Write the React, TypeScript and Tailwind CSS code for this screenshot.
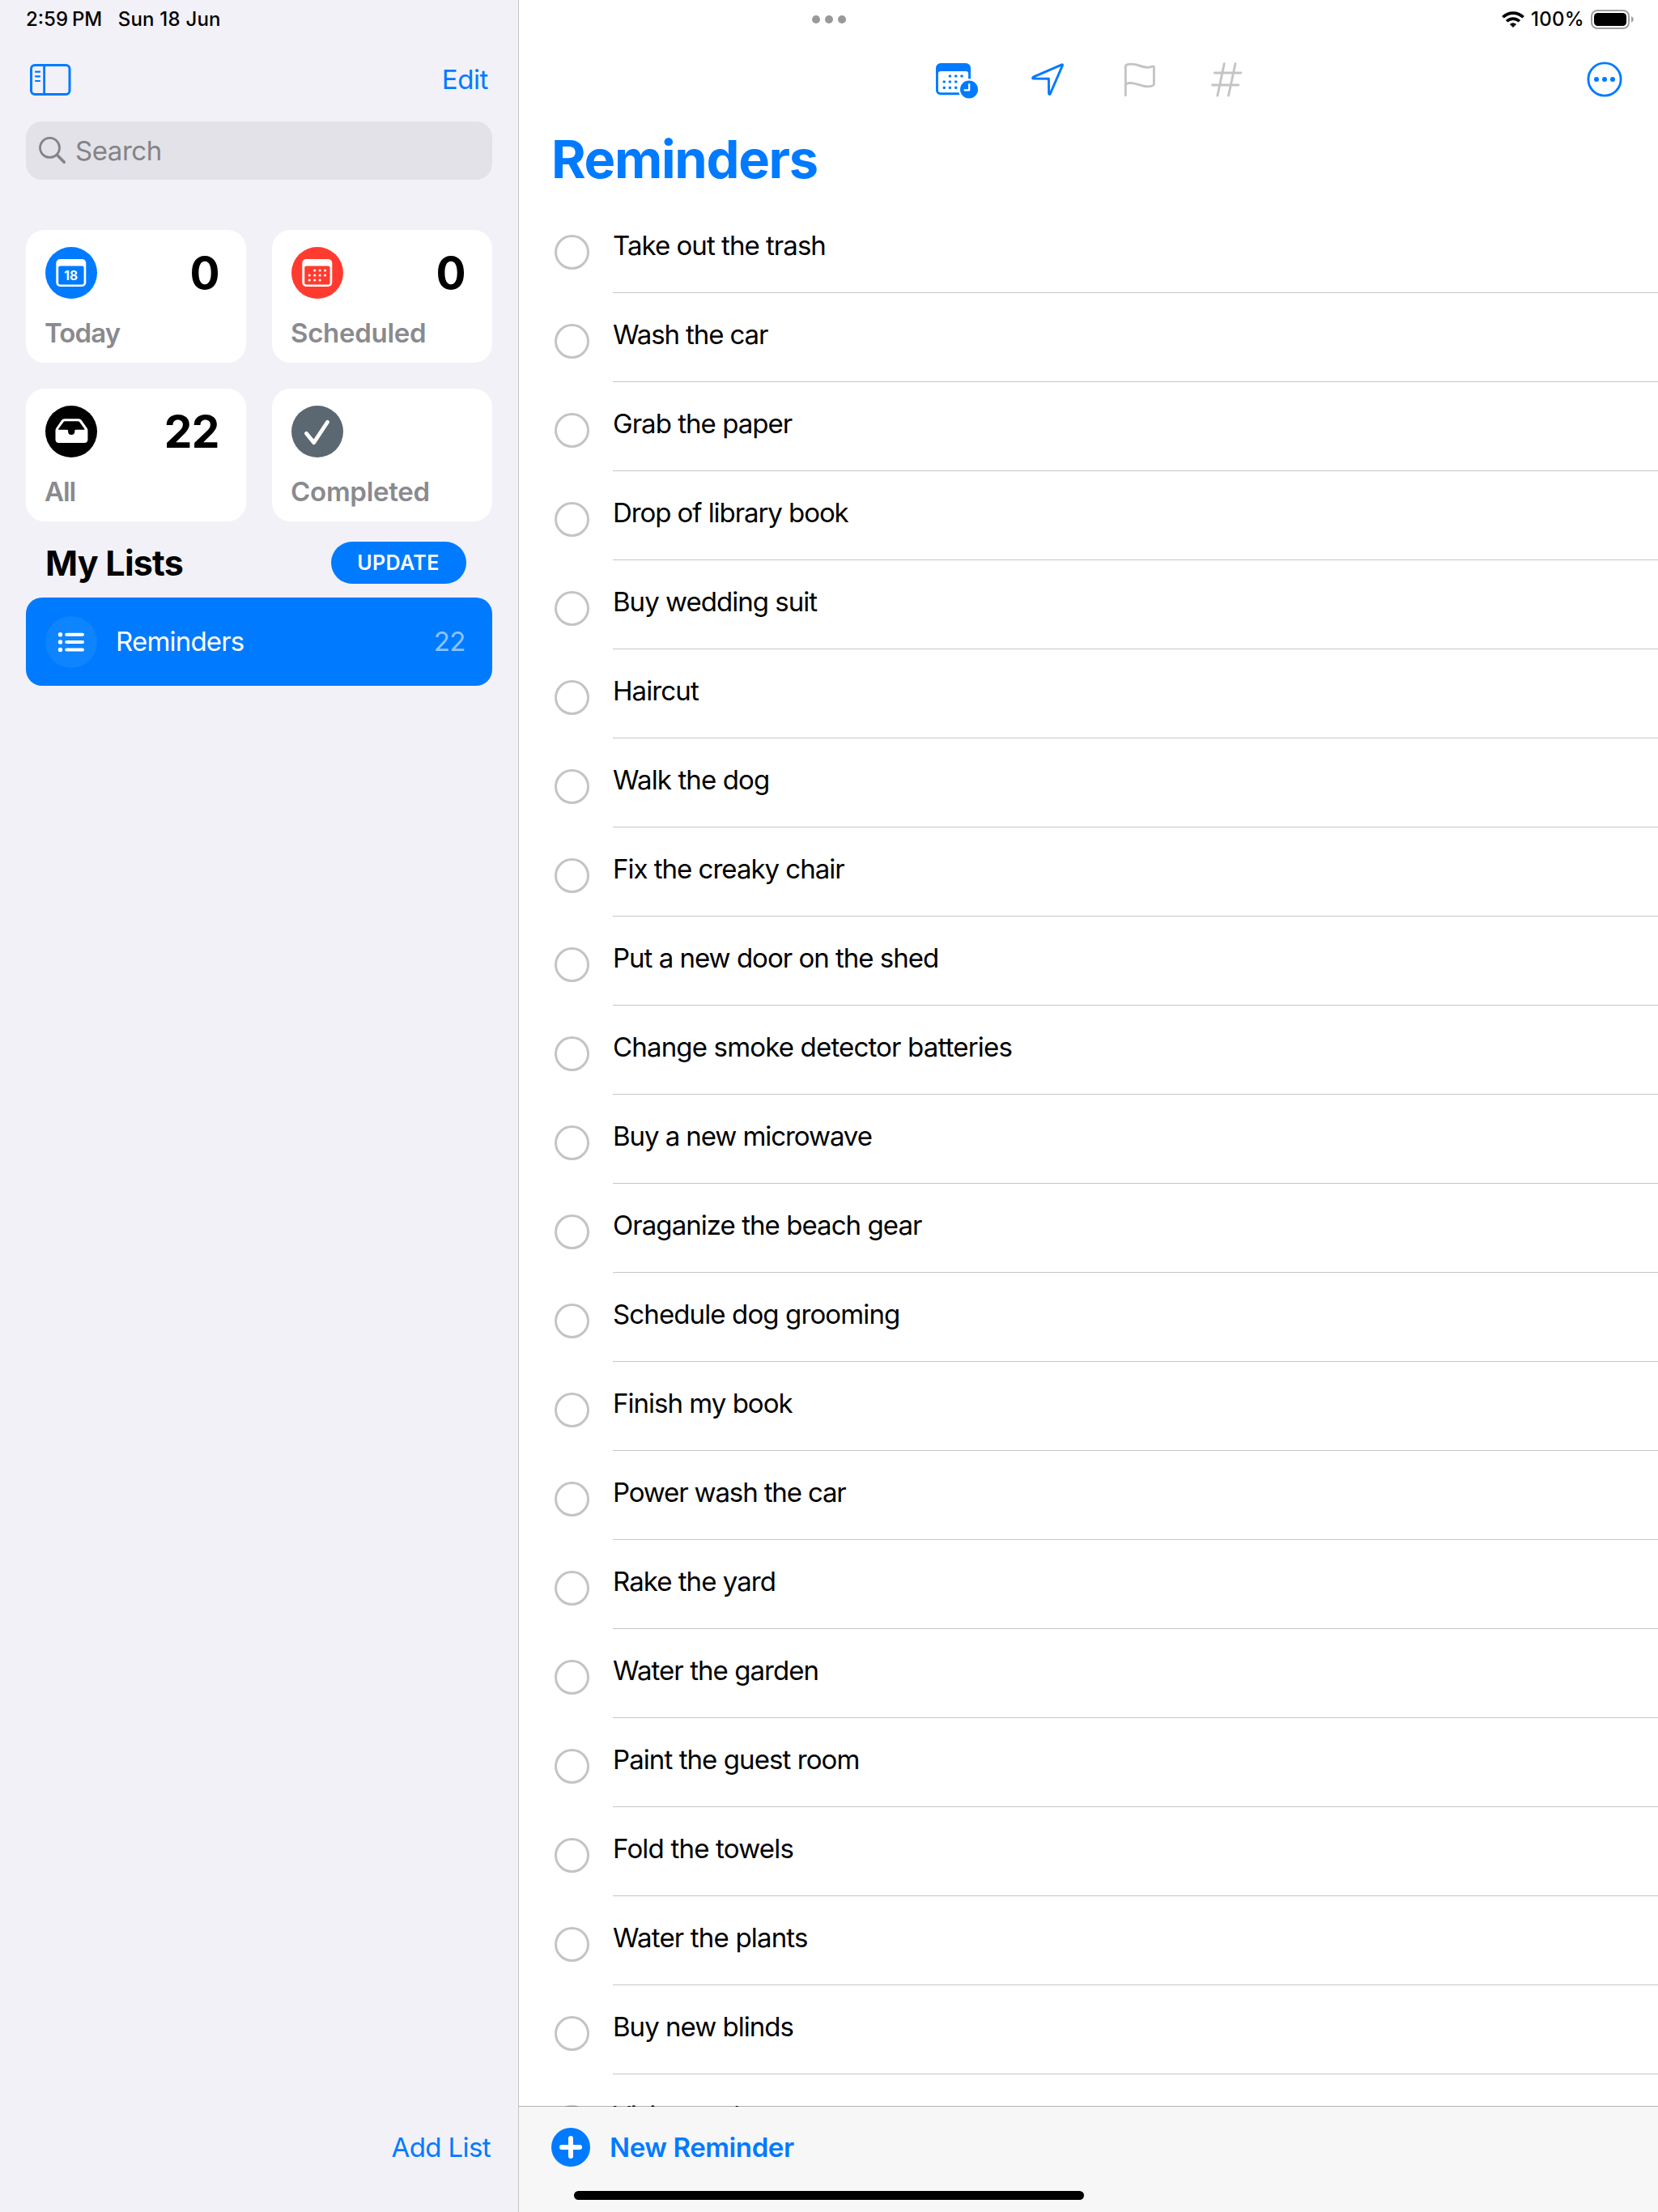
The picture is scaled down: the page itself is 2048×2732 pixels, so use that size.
import type { ReactNode } from "react";

const REMINDERS: { text: string; tracking: string }[] = [
  { text: "Take out the trash", tracking: "tracking-[-0.96px]" },
  { text: "Wash the car", tracking: "tracking-[-1.1px]" },
  { text: "Grab the paper", tracking: "tracking-[-0.97px]" },
  { text: "Drop of library book", tracking: "tracking-[-1.07px]" },
  { text: "Buy wedding suit", tracking: "tracking-[-0.98px]" },
  { text: "Haircut", tracking: "tracking-[-0.9px]" },
  { text: "Walk the dog", tracking: "tracking-[-0.87px]" },
  { text: "Fix the creaky chair", tracking: "tracking-[-1px]" },
  { text: "Put a new door on the shed", tracking: "tracking-[-1px]" },
  { text: "Change smoke detector batteries", tracking: "tracking-[-0.83px]" },
  { text: "Buy a new microwave", tracking: "tracking-[-1.07px]" },
  { text: "Oraganize the beach gear", tracking: "tracking-[-0.95px]" },
  { text: "Schedule dog grooming", tracking: "tracking-[-0.88px]" },
  { text: "Finish my book", tracking: "tracking-[-0.98px]" },
  { text: "Power wash the car", tracking: "tracking-[-1.14px]" },
  { text: "Rake the yard", tracking: "tracking-[-0.95px]" },
  { text: "Water the garden", tracking: "tracking-[-0.94px]" },
  { text: "Paint the guest room", tracking: "tracking-[-0.92px]" },
  { text: "Fold the towels", tracking: "tracking-[-0.8px]" },
  { text: "Water the plants", tracking: "tracking-[-0.82px]" },
  { text: "Buy new blinds", tracking: "tracking-[-0.98px]" },
  { text: "Visit grandma", tracking: "tracking-[-1px]" },
];

function SidebarIcon() {
  return (
    <svg width="51" height="39" viewBox="0 0 51 39" fill="none" stroke="#007aff" strokeLinecap="round">
      <rect x="1.5" y="1.5" width="47.5" height="36" rx="4.5" strokeWidth="3" />
      <path d="M17.600 2v35" strokeWidth="2.8" strokeLinecap="butt" />
      <path d="M7 9.700h5M7 15.300h5M7 21h5" strokeWidth="2.200" />
    </svg>
  );
}

function SearchIcon() {
  return (
    <svg width="34" height="34" viewBox="0 0 34 34" fill="none" stroke="#838388" strokeLinecap="round">
      <circle cx="13.5" cy="13.4" r="12" strokeWidth="2.8" />
      <path d="M22.600 22.500l8.600 8.800" strokeWidth="3.6" />
    </svg>
  );
}

function CalendarFrame({ color }: { color: string }) {
  return (
    <>
      <rect x="13.3" y="15" width="37" height="34" rx="5" fill="#fff" />
      <rect x="16.2" y="23.4" width="31.4" height="23" rx="2.2" fill={color} />
    </>
  );
}

function TodayIcon() {
  return (
    <svg width="64" height="64" viewBox="0 0 64 64">
      <circle cx="32" cy="32" r="32" fill="#007aff" />
      <CalendarFrame color="#007aff" />
      <text x="31.7" y="41.2" textAnchor="middle" fontSize="15.5" fontWeight="700" fill="#fff">
        18
      </text>
    </svg>
  );
}

function ScheduledIcon() {
  const dots = [
    [28.7, 29], [35.1, 29], [41.6, 29],
    [22.2, 35], [28.7, 35], [35.1, 35], [41.6, 35],
    [22.2, 41], [28.7, 41], [35.1, 41],
  ];
  return (
    <svg width="64" height="64" viewBox="0 0 64 64">
      <circle cx="32" cy="32" r="32" fill="#ff3b30" />
      <CalendarFrame color="#ff3b30" />
      {dots.map(([x, y]) => (
        <circle key={`${x}-${y}`} cx={x} cy={y} r="1.6" fill="#fff" />
      ))}
    </svg>
  );
}

function AllIcon() {
  return (
    <svg width="64" height="64" viewBox="0 0 64 64">
      <circle cx="32" cy="32" r="32" fill="#000" />
      <path
        d="M23.4 16.3h17.9q2.2 0 3.4 1.8l6.8 9.6q.9 1.3.9 2.9v11.2q0 4.2-4.2 4.2H16.7q-4.2 0-4.2-4.2V30.6q0-1.6.9-2.9l6.6-9.6q1.2-1.8 3.4-1.8z"
        fill="#fff"
      />
      <path
        d="M24.4 19.2h16q1.1 0 1.7.9l6.3 8.6q.6 1.1-.6 1.1H37.6q-1.3 0-1.3 1.3v.8a4.1 4.1 0 0 1-8.2 0v-.8q0-1.3-1.3-1.3H16.8q-1.2 0-.6-1.1l6.4-8.6q.6-.9 1.8-.9z"
        fill="#000"
      />
    </svg>
  );
}

function CompletedIcon() {
  return (
    <svg width="64" height="64" viewBox="0 0 64 64" fill="none">
      <circle cx="32" cy="32" r="32" fill="#5b6871" />
      <path d="M18.4 34.3l9.3 11.3L44.5 20.2" stroke="#fff" strokeWidth="4.8" strokeLinecap="round" strokeLinejoin="round" />
    </svg>
  );
}

function ListIcon() {
  return (
    <svg width="64" height="64" viewBox="0 0 64 64">
      <circle cx="32" cy="32" r="32" fill="#0e84ff" />
      <g fill="#fff">
        <circle cx="18.5" cy="22.7" r="2.7" />
        <circle cx="18.5" cy="32" r="2.7" />
        <circle cx="18.5" cy="41.5" r="2.7" />
      </g>
      <path d="M26.2 22.7h19.8M26.2 32h19.8M26.2 41.5h19.8" stroke="#fff" strokeWidth="4" strokeLinecap="round" />
    </svg>
  );
}

function CalendarClockIcon() {
  const dots = [
    [17.4, 18], [24.7, 18], [32, 18],
    [10.3, 25], [17.4, 25], [24.7, 25],
    [10.3, 32.3], [17.4, 32.3], [24.7, 32.3],
  ];
  return (
    <svg width="53" height="48" viewBox="0 0 53 48">
      <rect x="0" y="2" width="43" height="39.2" rx="6" fill="#007aff" />
      <rect x="2.9" y="12" width="37.2" height="26.3" rx="3" fill="#fff" />
      {dots.map(([x, y]) => (
        <rect key={`${x}-${y}`} x={x - 1.6} y={y - 1.6} width="3.2" height="3.2" rx="0.8" fill="#007aff" />
      ))}
      <circle cx="41" cy="34.5" r="13.2" fill="#fff" />
      <circle cx="41" cy="34.5" r="11" fill="#007aff" />
      <path d="M41.2 28v7.3h-5.7" stroke="#fff" strokeWidth="2.2" fill="none" strokeLinecap="round" strokeLinejoin="round" />
    </svg>
  );
}

function LocationIcon() {
  return (
    <svg width="44" height="44" viewBox="0 0 44 44" fill="none" stroke="#007aff" strokeWidth="2.9" strokeLinejoin="round">
      <path d="M39.6 3.8L4.3 19.2Q2.6 20.9 4.8 21.1L23.4 21.3L23.6 39.7Q24.3 41.5 25.3 39.7L40.5 4.6Q40.7 3.4 39.6 3.8z" />
    </svg>
  );
}

function FlagIcon() {
  return (
    <svg width="41" height="44" viewBox="0 0 41 44" fill="none" stroke="#c4c4c6" strokeWidth="2.9" strokeLinecap="round" strokeLinejoin="round">
      <path d="M3.3 41.7V6Q3.3 4.5 4.8 4C7.5 3 11.5 2.9 15 3.7C21 5 26 7.4 31.5 7.2C35 7 37.2 5.7 37.8 5.9Q38.4 6.1 38.4 7.2V27.6Q38.4 28.9 37.2 29.5C34 31 30.5 31.2 27 30.5C21.5 29.4 17 27 11 26.6C7.5 26.4 5 27.2 3.3 27.9" />
    </svg>
  );
}

function HashIcon() {
  return (
    <svg width="40" height="44" viewBox="0 0 40 44" fill="none" stroke="#c4c4c6" strokeWidth="2.9" strokeLinecap="round">
      <path d="M17.2 2.7L8.9 42M30.9 2.7L22.5 42M5.3 14h32.4M2.5 29h32.3" />
    </svg>
  );
}

function MoreIcon() {
  return (
    <svg width="44" height="44" viewBox="0 0 44 44">
      <circle cx="22" cy="22" r="20.1" fill="none" stroke="#007aff" strokeWidth="2.9" />
      <circle cx="12" cy="22" r="3" fill="#007aff" />
      <circle cx="22" cy="22" r="3" fill="#007aff" />
      <circle cx="32" cy="22" r="3" fill="#007aff" />
    </svg>
  );
}

function WifiIcon() {
  return (
    <svg width="28" height="20" viewBox="0 0 28 20" fill="none" stroke="#000" strokeWidth="3.7">
      <path d="M1.4 7.3A17.8 17.8 0 0 1 26.6 7.3" />
      <path d="M6.1 12.3A11.2 11.2 0 0 1 21.9 12.3" />
      <path d="M14 20L9.9 15.9A5.9 5.9 0 0 1 18.1 15.9z" fill="#000" stroke="none" />
    </svg>
  );
}

function BatteryIcon() {
  return (
    <svg width="54" height="24" viewBox="0 0 54 24">
      <rect x="1" y="1" width="46" height="22" rx="7" fill="none" stroke="#a0a0a0" strokeWidth="2" />
      <rect x="4" y="4" width="40" height="16" rx="4.5" fill="#000" />
      <path d="M50 8q2.800 1.300 2.800 4t-2.800 4z" fill="#a0a0a0" />
    </svg>
  );
}

function PlusIcon() {
  return (
    <svg width="48" height="48" viewBox="0 0 48 48">
      <circle cx="24" cy="24" r="24" fill="#007aff" />
      <path d="M24 13v22M13 24h22" stroke="#fff" strokeWidth="6" strokeLinecap="round" />
    </svg>
  );
}

function SummaryCard({ icon, count, label, tracking }: { icon: ReactNode; count?: string; label: string; tracking: string }) {
  return (
    <div className="flex h-[164px] flex-col rounded-[23px] bg-white pt-[21px] pr-[33px] pl-6">
      <div className="flex h-16 items-center justify-between">
        {icon}
        <span className="text-[55px] leading-none font-bold tracking-[-0.5px]">{count}</span>
      </div>
      <span className={`mt-[22px] -ml-px text-[33px] leading-10 font-semibold text-[#8a8a8e] ${tracking}`}>{label}</span>
    </div>
  );
}

function Sidebar() {
  return (
    <aside className="flex w-[641px] shrink-0 flex-col border-r border-[#c4c4c7] bg-[#f2f1f7] px-8">
      <div className="flex h-[47px] items-center text-[24px] font-medium">
        <span>2:59</span>
        <span className="ml-[5px] tracking-[-0.3px]">PM</span>
        <span className="ml-5 tracking-[0.2px]">Sun 18 Jun</span>
      </div>
      <div className="flex h-[103px] items-center justify-between pr-[5px] pl-[5px]">
        <SidebarIcon />
        <span className="text-[33px] tracking-[-0.4px] text-[#007aff]">Edit</span>
      </div>
      <div className="flex h-[72px] items-center rounded-[20px] bg-[#e3e2e8] pl-4">
        <SearchIcon />
        <span className="mt-px ml-[11px] text-[33px] tracking-[-0.45px] text-[#838388]">Search</span>
      </div>
      <div className="mt-[62px] grid grid-cols-2 gap-8">
        <SummaryCard icon={<TodayIcon />} count="0" label="Today" tracking="tracking-[-0.9px]" />
        <SummaryCard icon={<ScheduledIcon />} count="0" label="Scheduled" tracking="tracking-[-0.3px]" />
        <SummaryCard icon={<AllIcon />} count="22" label="All" tracking="tracking-[-1.1px]" />
        <SummaryCard icon={<CompletedIcon />} label="Completed" tracking="tracking-[-0.26px]" />
      </div>
      <div className="mt-[25px] flex h-[52px] items-center justify-between pr-8 pl-6">
        <h2 className="text-[43px] leading-none font-bold tracking-[-0.75px]">My Lists</h2>
        <button className="flex h-[52px] w-[167px] items-center justify-center rounded-full bg-[#007aff] pt-px pr-px text-[25px] font-semibold tracking-[0.4px] text-white">
          UPDATE
        </button>
      </div>
      <div className="mt-[17px] flex h-[109px] items-center rounded-[20px] bg-[#007aff] pr-[33px] pl-6 text-[33px] text-white">
        <ListIcon />
        <span className="ml-[23px] tracking-[-0.8px]">Reminders</span>
        <span className="ml-auto tracking-[-0.5px] text-[#8cc2ff]">22</span>
      </div>
      <div className="mt-auto mb-[29px] flex h-[100px] items-center justify-end pr-0.5">
        <span className="text-[33px] tracking-[-0.6px] text-[#007aff]">Add List</span>
      </div>
    </aside>
  );
}

export default function App() {
  return (
    <div className="flex h-[2732px] w-[2048px] overflow-hidden bg-white font-['Inter',sans-serif] text-black">
      <Sidebar />
      <main className="flex min-w-0 flex-1 flex-col">
        <div className="flex h-[47px] shrink-0 items-center justify-between pr-[29px] pl-[362px]">
          <div className="flex gap-[6px]">
            <i className="size-[10px] rounded-full bg-[#999]" />
            <i className="size-[10px] rounded-full bg-[#999]" />
            <i className="size-[10px] rounded-full bg-[#999]" />
          </div>
          <div className="flex items-center">
            <WifiIcon />
            <span className="ml-2 text-[24px] font-medium tracking-[0.3px]">100%</span>
            <span className="ml-2">
              <BatteryIcon />
            </span>
          </div>
        </div>
        <div className="flex h-[103px] shrink-0 items-center pr-11 pb-px pl-[515px]">
          <span className="mt-[3px]">
            <CalendarClockIcon />
          </span>
          <span className="ml-[63px]">
            <LocationIcon />
          </span>
          <span className="ml-[71px]">
            <FlagIcon />
          </span>
          <span className="ml-[67px]">
            <HashIcon />
          </span>
          <span className="ml-auto">
            <MoreIcon />
          </span>
        </div>
        <h1 className="h-[102px] shrink-0 pl-[40px] text-[65px] leading-[94px] font-bold tracking-[-1.3px] text-[#007aff]">
          Reminders
        </h1>
        <ul className="min-h-0 flex-1 overflow-hidden">
          {REMINDERS.map((item) => (
            <li key={item.text} className="flex h-[110px] pl-11">
              <span className="mt-[38px] size-[43px] shrink-0 rounded-full border-[3px] border-[#c4c4c6]" />
              <span className={`ml-[29px] flex-1 border-b border-[#c6c6c8] pt-[31px] text-[33px] leading-10 ${item.tracking}`}>
                {item.text}
              </span>
            </li>
          ))}
        </ul>
        <footer className="relative -mt-px h-[131px] shrink-0 border-t border-black/30 bg-[#f7f7f7] bg-clip-padding">
          <div className="flex h-[100px] items-center pl-10">
            <PlusIcon />
            <span className="mt-px ml-6 text-[33px] font-semibold tracking-[-0.4px] text-[#007aff]">New Reminder</span>
          </div>
          <div className="mt-1 ml-[68px] h-[11px] w-[630px] rounded-full bg-black" />
        </footer>
      </main>
    </div>
  );
}
